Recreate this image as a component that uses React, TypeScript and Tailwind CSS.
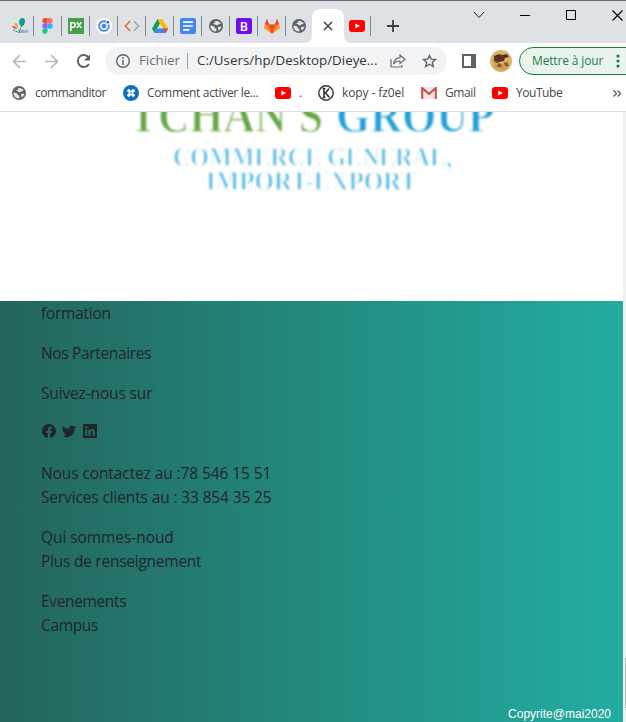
import React from "react";
import { BsFacebook, BsTwitter, BsLinkedin } from "react-icons/bs";

const Globe = () => (
  <svg className="shrink-0" width="14" height="14" viewBox="0 0 14 14">
    <circle cx="7" cy="7" r="7" fill="#5f6368" />
    <path d="M1.4 6.8c1.6-.1 3 .1 3.8.9s.3 1.6 1.4 1.8 1 1.5.5 2.9C4 12.700 1.300 10 1.400 6.800zM6.200 2.200c2-.9 4.300.2 5.500 2.300-.9.8-2 .5-2.700 1.200s-1.900.9-2.600.1-2.100-.6-2-1.500 1.600-.3 1.900-.9-.7-.7-.1-1.200zM9 8.200c1.200-.6 2.400-.2 3.300-.4-.3 1.600-1.200 2.900-2.500 3.700.2-1.300-1.500-2-.8-3.300z" fill="#e4e6e9" />
  </svg>
);
const YouTube = () => (
  <svg className="shrink-0" width="16" height="12" viewBox="0 0 16 12">
    <rect width="16" height="12" rx="3" fill="#f00" />
    <path d="M6.300 3.400v5.200L11 6z" fill="#fff" />
  </svg>
);
const Bakeli = () => (
  <svg className="shrink-0" width="18" height="18" viewBox="0 0 18 18">
    <path d="M10.500 10C6.500 6 8 1 11.500 1c4 0 3 7-1 9z" fill="#159a91" />
    <path d="M7 11C4.500 10 3 7.500 4 5.500 6 6 7.500 8 7 11z" fill="#edaa45" />
    <path d="M6 12C4 12.500 1.500 11 1 9c2.500-.5 4.500.5 5 3z" fill="#e65b39" />
    <path d="M2 13l5 2M10 10l-2 6" stroke="#48a6a1" />
    <text x="7" y="16" fontSize="5" textLength="10" lengthAdjust="spacingAndGlyphs" fill="#168f88" fontFamily="Liberation Sans, sans-serif">bakeli</text>
  </svg>
);
const Figma = () => (
  <svg className="shrink-0" width="11" height="16" viewBox="0 0 11 16">
    <path d="M3 0h2.500v5.300H3A2.650 2.650 0 013 0z" fill="#f24e1e" />
    <path d="M5.500 0H8a2.650 2.650 0 010 5.300H5.500z" fill="#ff7262" />
    <path d="M3 5.300h2.500v5.300H3a2.650 2.650 0 010-5.300z" fill="#a259ff" />
    <circle cx="8" cy="8" r="2.650" fill="#1abcfe" />
    <path d="M3 10.600h2.500v2.700A2.600 2.600 0 113 10.600z" fill="#0acf83" />
  </svg>
);
const Pexels = () => (
  <svg className="shrink-0" width="16" height="16" viewBox="0 0 16 16">
    <path fill="#43a047" d="M0 0h16v16H0z" />
    <path d="M2.800 13V4.800H5a2.200 2.200 0 010 4.400H2.800M8.800 4.300l4.600 5.700M13.400 4.300L8.800 10" fill="none" stroke="#fff" strokeWidth="1.600" />
  </svg>
);
const Ionic = () => (
  <svg className="shrink-0" width="16" height="16" viewBox="0 0 16 16">
    <circle cx="8" cy="8" r="8" fill="#fff" />
    <path d="M10.300 3.600A5 5 0 1012.700 6.400" stroke="#3477e8" strokeWidth="1.400" fill="none" />
    <circle cx="8" cy="8" r="2.300" fill="#4285f4" /><circle cx="12" cy="4.200" r="1.300" fill="#245ee8" />
    <circle cx="8" cy="8" r="3.400" stroke="#80abf5" strokeWidth=".5" fill="none" />
  </svg>
);
const Code = () => (
  <svg className="shrink-0" width="16" height="12" viewBox="0 0 16 12" fill="none" strokeWidth="1.700">
    <path d="M6 1L1.500 6 6 11" stroke="#e66e43" /><path d="M10 1l4.500 5-4.500 5" stroke="#aaa" />
  </svg>
);
const Drive = () => (
  <svg className="shrink-0" width="16" height="14" viewBox="0 0 16 14">
    <path d="M5.500 0L0 9.500 2.500 14l5.500-9.500z" fill="#0f9d58" />
    <path d="M5.500 0h5L16 9.500h-5z" fill="#fbbc05" />
    <path d="M5.200 9.500H16L13.500 14h-11z" fill="#4285f4" />
    <path d="M11 9.500h5L13.500 14z" fill="#ea4335" />
  </svg>
);
const Docs = () => (
  <svg className="shrink-0" width="16" height="16" viewBox="0 0 16 16">
    <rect width="16" height="16" rx="2" fill="#4285f4" />
    <path d="M3 4.200h10M3 8h10M3 11.800h6.500" stroke="#fff" strokeWidth="1.700" />
  </svg>
);
const Bootstrap = () => (
  <svg className="shrink-0" width="16" height="16" viewBox="0 0 16 16">
    <rect width="16" height="16" rx="2" fill="#7011ed" />
    <text x="4" y="12.500" fontSize="12.500" fontFamily="Roboto, sans-serif" fontWeight="500" fill="#fff">B</text>
  </svg>
);
const Gitlab = () => (
  <svg className="shrink-0" width="16" height="15" viewBox="0 0 16 15">
    <path d="M8 15L0 9 2.800 0l2.300 5.500h5.800L13.200 0 16 9z" fill="#fc6d26" />
    <path d="M2.800 0l2.300 5.500H1.100zM13.200 0l-2.300 5.500h4z" fill="#e24329" />
    <path d="M8 15L0 9l1.100-3.500zM8 15l8-6-1.100-3.500z" fill="#fca326" />
    <path d="M8 15L5.100 5.500h5.800z" fill="#e65328" />
  </svg>
);

const pinned = [Bakeli, Figma, Pexels, Ionic, Code, Drive, Docs, Globe, Bootstrap, Gitlab];

function Tabs() {
  return (
    <div className="flex h-[43px] shrink-0 border-t border-[#68696c] bg-[#dee1e6] pl-1.5">
      {pinned.map((Icon, i) => (
        <div key={i} className="mt-[15px] flex h-5 w-7 shrink-0 items-center justify-center border-r border-[#85888d]"><Icon /></div>
      ))}
      <div className="mt-[15px] flex h-5 w-[26px] shrink-0 items-center justify-center"><Globe /></div>
      <div className="relative mt-2 flex h-[34px] w-8 shrink-0 items-center justify-center rounded-t-lg bg-white">
        <svg className="absolute bottom-0 -left-2" width="8" height="8"><path d="M0 8Q8 8 8 0V8z" fill="#fff" /></svg>
        <svg width="10" height="10" viewBox="0 0 10 10"><path d="M1 1l8 8M9 1L1 9" stroke="#45484b" strokeWidth="1.600" /></svg>
        <svg className="absolute -right-2 bottom-0" width="8" height="8"><path d="M0 0Q0 8 8 8H0z" fill="#fff" /></svg>
      </div>
      <div className="mt-[15px] flex h-5 w-[27px] shrink-0 items-center justify-center border-r border-[#85888d]"><YouTube /></div>
      <svg className="mt-[19px] ml-4 shrink-0" width="12" height="12"><path d="M6 0v12M0 6h12" stroke="#3c4043" strokeWidth="1.800" /></svg>
      <div className="mt-2 ml-[74px] flex h-3 shrink-0 items-center">
        <svg className="w-3" width="12" height="8"><path d="M1 1l5 5.500L11 1" fill="none" stroke="#222" /></svg>
        <svg className="ml-[35px]" width="10" height="10"><path d="M0 5.500h10" stroke="#000" /></svg>
        <svg className="ml-9" width="11" height="11"><path d="M.5.500h9v9h-9z" fill="none" stroke="#000" /></svg>
        <svg className="ml-[35px]" width="11" height="11"><path d="M.5.500l10 10M10.500.500l-10 10" stroke="#000" strokeWidth="1.100" /></svg>
      </div>
    </div>
  );
}

function Toolbar() {
  return (
    <div className="flex h-9 shrink-0 items-center overflow-hidden bg-white pl-3 text-[13.300px] *:shrink-0">
      <svg width="15" height="15" viewBox="0 0 15 15" fill="none" stroke="#b8b8b8" strokeWidth="1.700"><path d="M14 7.500H1.500M8 1L1.500 7.500 8 14" /></svg>
      <svg className="ml-[17px]" width="15" height="15" viewBox="0 0 15 15" fill="none" stroke="#b8b8b8" strokeWidth="1.700"><path d="M1 7.500h12.500M7 1l6.500 6.500L7 14" /></svg>
      <svg className="ml-[17px]" width="15" height="15" viewBox="0 0 15 15"><path d="M12.700 3.500A6 6 0 1013 10" fill="none" stroke="#5f6368" strokeWidth="2" /><path d="M14 .5v6H8z" fill="#5f6368" /></svg>
      <div className="ml-3.5 flex h-7 w-[342px] items-center rounded-full bg-[#f1f3f4] pl-[11px] *:shrink-0">
        <svg width="14" height="14" viewBox="0 0 14 14"><circle cx="7" cy="7" r="6.300" fill="none" stroke="#5f6368" strokeWidth="1.400" /><path d="M7 6v5M7 3v1.700" stroke="#5f6368" strokeWidth="1.500" /></svg>
        <span className="ml-[9px] w-[48px] whitespace-nowrap text-[#6b6f74]">Fichier</span>
        <span className="mr-[9px] h-4 w-px bg-[#9b9da0]" />
        <span className="w-[193px] whitespace-nowrap tracking-[0.040px] text-[#303337]">C:/Users/hp/Desktop/Dieye...</span>
        <svg width="16" height="14" viewBox="0 0 16 14" fill="none" stroke="#6b6e72" strokeWidth="1.200"><path d="M1 5v8h11v-2M10 1l5 4.500-5 4V7C7 7 5 8 3.500 10 4 6.500 6 4 10 3.700z" /></svg>
        <svg className="ml-4" width="15" height="14" viewBox="0 0 15 14" fill="none" stroke="#5f6368" strokeWidth="1.400"><path d="M7.500 1.500l1.800 3.700 4.200.4-3.200 2.700 1 4.200-3.800-2.300-3.800 2.300 1-4.200-3.200-2.700 4.200-.4z" /></svg>
      </div>
      <div className="ml-[15px] h-3.5 w-3.5 border-2 border-r-[5px] border-[#5f6368]" />
      <svg className="ml-3.5" width="22" height="22" viewBox="0 0 22 22">
        <circle cx="11" cy="11" r="11" fill="#d9b769" />
        <path d="M4 6l5-2 3 1 5-1 2 3-4 1-1 3-5 1-2 1-3-2z" fill="#583026" /><path d="M8 13l3 1 1 3H7zM14 12l4 1 1 3h-4z" fill="#795032" /><path d="M2 9l4 2 5 3 8-4-1 8-6 3-7-3z" fill="#b66f38" opacity=".3" />
      </svg>
      <div className="ml-[7px] flex h-7 w-[125px] items-center rounded-full border border-[#188038] bg-[#e8f3ec] pl-3 text-[12px] text-[#257c4c] *:shrink-0">
        <span className="w-[84px] whitespace-nowrap tracking-[-0.150px]">Mettre à jour</span>
        <svg width="4" height="14"><circle cx="2" cy="2" r="1.600" fill="#188038" /><circle cx="2" cy="7" r="1.600" fill="#188038" /><circle cx="2" cy="12" r="1.600" fill="#188038" /></svg>
      </div>
    </div>
  );
}

function Bookmarks() {
  return (
    <div className="flex h-[33px] shrink-0 items-center border-b border-[#dadce0] bg-white pb-1 pl-3 text-[12px] whitespace-nowrap text-[#44474b] *:shrink-0">
      <Globe />
      <span className="ml-[9px] w-[88px] tracking-[-0.450px]">commanditor</span>
      <svg width="16" height="16" viewBox="0 0 16 16"><circle cx="8" cy="8" r="8" fill="#0b73bd" /><path d="M4.800 4.800l6.400 6.400M11.200 4.800l-6.400 6.400" stroke="#fff" strokeWidth="3" /><path d="M7 8h2" stroke="#0b73bd" /></svg>
      <span className="ml-2 w-[128px] tracking-[-0.330px]">Comment activer le...</span>
      <YouTube />
      <span className="ml-2 w-[19px]">.</span>
      <svg width="16" height="16" viewBox="0 0 16 16" fill="none" stroke="#333"><circle cx="8" cy="8" r="7.200" strokeWidth="1.400" /><path d="M6 3.500v9M6 8h1.500L11 3.500M7.500 8l4 4.500M4.500 3.500h3M4.500 12.500h3" strokeWidth="1.600" /></svg>
      <span className="ml-2 w-[79px] tracking-[-0.100px]">kopy - fz0el</span>
      <svg width="16" height="12" viewBox="0 0 16 12"><path d="M1 0h14v12H1z" fill="#e8e8e8" /><path d="M1.200 12V1L8 7l6.800-6v11" fill="none" stroke="#d94437" strokeWidth="2" /></svg>
      <span className="ml-2 w-[47px] tracking-[-0.400px]">Gmail</span>
      <YouTube />
      <span className="ml-2 tracking-[-0.450px]">YouTube</span>
      <svg className="mr-[5px] ml-auto" width="8" height="7" viewBox="0 0 8 7"><path d="M.5.500l3 3-3 3M4.500.500l3 3-3 3" fill="none" stroke="#555" strokeWidth="1.300" /></svg>
    </div>
  );
}

function Logo() {
  return (
    <svg className="block h-[189px] w-full shrink-0 font-['Liberation_Serif',serif] font-bold" viewBox="0 112 623 189">
      <g className="blur-[0.800px]" stroke="#fff" strokeWidth="1.300">
        <text x="129" y="132" fontSize="50" textLength="194" lengthAdjust="spacingAndGlyphs" fill="#68a544">TCHAN'S</text>
        <text x="336" y="132" fontSize="50" textLength="159" lengthAdjust="spacingAndGlyphs" fill="#219fd7">GROUP</text>
      </g>
      <g className="blur-[1px]" fill="#46b2e2" stroke="#fff" strokeWidth="1.300">
        <text x="173" y="166" fontSize="28" textLength="279" lengthAdjust="spacingAndGlyphs">COMMERCE GENERAL,</text>
        <text x="206" y="190" fontSize="28" textLength="211" lengthAdjust="spacingAndGlyphs">IMPORT-EXPORT</text>
      </g>
    </svg>
  );
}

export default function App() {
  return (
    <div className="flex h-[722px] w-[626px] flex-col overflow-hidden bg-white font-['Open_Sans','Noto_Sans',sans-serif]">
      <Tabs />
      <Toolbar />
      <Bookmarks />
      <div className="flex min-h-0 flex-1">
        <main className="flex w-[623px] flex-col">
          <Logo />
          <footer className="flex flex-1 flex-col gap-4 bg-linear-to-r/srgb from-[#24655c] to-[#22ada0] pl-[41px] text-[15.500px] leading-6 tracking-[-0.250px] text-[#212529]">
            <p>formation</p>
            <p className="tracking-[-0.350px]">Nos Partenaires</p>
            <p className="tracking-[-0.150px]">Suivez-nous sur</p>
            <div className="flex h-6 items-start gap-1.5 pt-[3px] text-[14px]"><BsFacebook className="ml-px" /><BsTwitter /><BsLinkedin className="ml-px" /></div>
            <p><span className="tracking-[-0.100px]">Nous contactez au :78 546 15 51</span><br /><span className="tracking-[-0.140px]">Services clients au : 33 854 35 25</span></p>
            <p><span className="tracking-[-0.070px]">Qui sommes-noud</span><br />Plus de renseignement</p>
            <p className="tracking-[-0.350px]">Evenements<br />Campus</p>
            <p className="mt-auto self-end pr-3 font-['Liberation_Sans',sans-serif] text-[12px] leading-4 tracking-normal text-white">Copyrite@mai2020</p>
          </footer>
        </main>
        <div className="flex w-[3px] flex-col items-end bg-[#f1f1f1] pt-[546px]"><div className="h-[50px] w-px shrink-0 bg-[#b5b5b5]" /></div>
      </div>
    </div>
  );
}
